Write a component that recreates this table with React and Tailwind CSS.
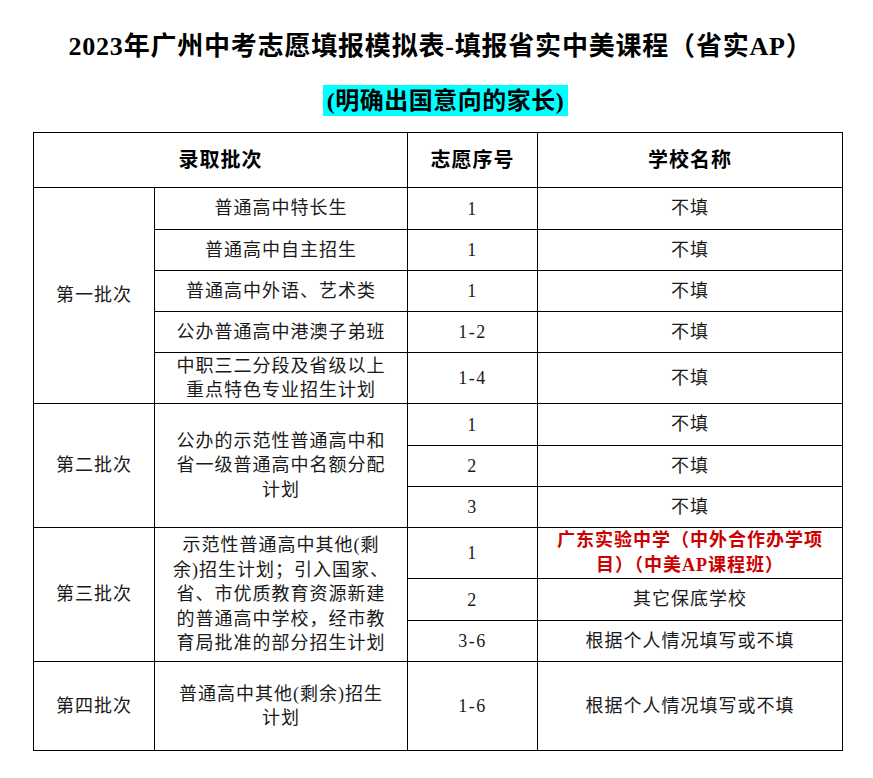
import React from "react";

const FONT = { fontFamily: '"Liberation Serif", "Noto Sans CJK SC", serif' };

function Cell({ className = "", children }) {
  return (
    <div
      className={`flex items-center justify-center text-center border-r border-b border-black ${className}`}
    >
      {children}
    </div>
  );
}

function Txt({ children, className = "" }) {
  return (
    <div className={`text-[18px] leading-[24.5px] tracking-[1px] text-[#1a1a1a] whitespace-nowrap ${className}`}>
      {children}
    </div>
  );
}

function Num({ children }) {
  return <div className="text-[18px] leading-[24px] tracking-[1.5px] text-[#1a1a1a]">{children}</div>;
}

function Hd({ children }) {
  return <div className="text-[20px] font-bold tracking-[1px] text-black">{children}</div>;
}

export default function App() {
  return (
    <div className="w-[873px] h-[778px] bg-white" style={FONT}>
      <div className="pt-[30px] text-center">
        <div className="text-[26px] leading-[34px] font-bold tracking-[0.8px] text-black pl-[8px]">
          2023年广州中考志愿填报模拟表-填报省实中美课程（省实AP）
        </div>
      </div>
      <div className="flex justify-center mt-[21px] pl-[18px]">
        <div className="bg-[#00ffff] h-[31px] px-[4px] flex items-center text-[24px] font-semibold tracking-[0.5px] text-black">
          (明确出国意向的家长)
        </div>
      </div>
      <div className="mt-[16px] ml-[33px] w-fit border-l border-t border-black grid grid-cols-[121px_253px_130px_305px] grid-rows-[55px_42px_41px_41px_41px_51px_42px_41px_41px_51px_42px_41px_89px]">
        <Cell className="col-span-2"><Hd>录取批次</Hd></Cell>
        <Cell><Hd>志愿序号</Hd></Cell>
        <Cell><Hd>学校名称</Hd></Cell>

        <Cell className="row-span-5"><Txt>第一批次</Txt></Cell>
        <Cell><Txt>普通高中特长生</Txt></Cell>
        <Cell><Num>1</Num></Cell>
        <Cell><Txt>不填</Txt></Cell>

        <Cell><Txt>普通高中自主招生</Txt></Cell>
        <Cell><Num>1</Num></Cell>
        <Cell><Txt>不填</Txt></Cell>

        <Cell><Txt>普通高中外语、艺术类</Txt></Cell>
        <Cell><Num>1</Num></Cell>
        <Cell><Txt>不填</Txt></Cell>

        <Cell><Txt>公办普通高中港澳子弟班</Txt></Cell>
        <Cell><Num>1-2</Num></Cell>
        <Cell><Txt>不填</Txt></Cell>

        <Cell><Txt>中职三二分段及省级以上<br />重点特色专业招生计划</Txt></Cell>
        <Cell><Num>1-4</Num></Cell>
        <Cell><Txt>不填</Txt></Cell>

        <Cell className="row-span-3"><Txt>第二批次</Txt></Cell>
        <Cell className="row-span-3"><Txt>公办的示范性普通高中和<br />省一级普通高中名额分配<br />计划</Txt></Cell>
        <Cell><Num>1</Num></Cell>
        <Cell><Txt>不填</Txt></Cell>
        <Cell><Num>2</Num></Cell>
        <Cell><Txt>不填</Txt></Cell>
        <Cell><Num>3</Num></Cell>
        <Cell><Txt>不填</Txt></Cell>

        <Cell className="row-span-3"><Txt>第三批次</Txt></Cell>
        <Cell className="row-span-3">
          <Txt>示范性普通高中其他(剩<br />余)招生计划；引入国家、<br />省、市优质教育资源新建<br />的普通高中学校，经市教<br />育局批准的部分招生计划</Txt>
        </Cell>
        <Cell><Num>1</Num></Cell>
        <Cell>
          <div className="text-[18px] leading-[25px] tracking-[1px] font-bold text-[#cc0000] whitespace-nowrap">
            广东实验中学（中外合作办学项<br />目）（中美AP课程班）
          </div>
        </Cell>
        <Cell><Num>2</Num></Cell>
        <Cell><Txt>其它保底学校</Txt></Cell>
        <Cell><Num>3-6</Num></Cell>
        <Cell><Txt>根据个人情况填写或不填</Txt></Cell>

        <Cell><Txt>第四批次</Txt></Cell>
        <Cell><Txt>普通高中其他(剩余)招生<br />计划</Txt></Cell>
        <Cell><Num>1-6</Num></Cell>
        <Cell><Txt>根据个人情况填写或不填</Txt></Cell>
      </div>
    </div>
  );
}
